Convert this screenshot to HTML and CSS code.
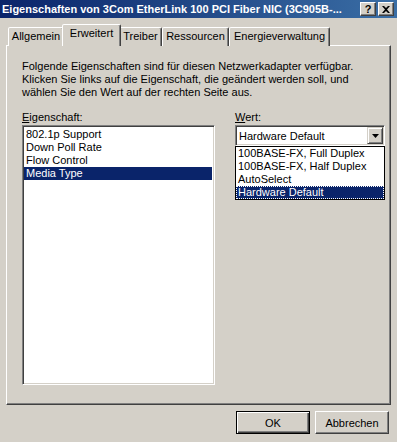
FILE: index.html
```html
<!DOCTYPE html>
<html lang="de">
<head>
<meta charset="UTF-8" />
<title>Eigenschaften von 3Com EtherLink 100 PCI Fiber NIC</title>
<link rel="stylesheet" href="styles.css">
</head>
<body>
<div class="dialog">
  <div class="titlebar">
    <span class="title">Eigenschaften von 3Com EtherLink 100 PCI Fiber NIC (3C905B-...</span>
    <div class="caption-buttons">
      <span class="cap-btn">?</span>
      <span class="cap-btn">
        <svg width="8" height="7" viewBox="0 0 8 7"><path d="M0 0h2l2 2 2-2h2L5 3.5 8 7H6L4 5 2 7H0l3-3.5z" fill="#000"/></svg>
      </span>
    </div>
  </div>

  <div class="tabs">
    <span class="tab tab-allgemein">Allgemein</span>
    <span class="tab active tab-erweitert">Erweitert</span>
    <span class="tab tab-treiber">Treiber</span>
    <span class="tab tab-ressourcen">Ressourcen</span>
    <span class="tab tab-energie">Energieverwaltung</span>
  </div>

  <div class="panel">
    <p class="intro">Folgende Eigenschaften sind für diesen Netzwerkadapter verfügbar.
      Klicken Sie links auf die Eigenschaft, die geändert werden soll, und
      wählen Sie den Wert auf der rechten Seite aus.</p>

    <div class="columns">
      <div class="col-left">
        <div class="label"><u>E</u>igenschaft:</div>
        <ul class="listbox">
          <li>802.1p Support</li>
          <li>Down Poll Rate</li>
          <li>Flow Control</li>
          <li class="selected">Media Type</li>
        </ul>
      </div>
      <div class="col-right">
        <div class="label"><u>W</u>ert:</div>
        <div class="combo">
          <div class="combo-field">
            <span class="combo-value">Hardware Default</span>
            <span class="combo-btn">
              <svg width="7" height="4" viewBox="0 0 7 4"><path d="M0 0h7L3.5 4z" fill="#000"/></svg>
            </span>
          </div>
          <ul class="dropdown">
            <li>100BASE-FX, Full Duplex</li>
            <li>100BASE-FX, Half Duplex</li>
            <li>AutoSelect</li>
            <li class="selected">Hardware Default</li>
          </ul>
        </div>
      </div>
    </div>
  </div>

  <div class="actions">
    <button class="btn default">OK</button>
    <button class="btn">Abbrechen</button>
  </div>
</div>
</body>
</html>
```

FILE: styles.css
```css
/* Windows 2000 Eigenschaften-Dialog */
body {
  margin: 0;
  background: #d4d0c8;
  font-family: 'Liberation Sans', Arial, sans-serif;
  font-size: 11px;
  color: #000;
}
.dialog {
  width: 397px;
  height: 442px;
  background: #d4d0c8;
}
.titlebar {
  height: 18px;
  display: flex;
  align-items: center;
  justify-content: space-between;
  padding: 0 3px 0 2px;
  background: linear-gradient(to right, #0a246a, #3a6ea5);
}
.title {
  color: #fff;
  font-weight: 700;
  font-size: 11px;
  white-space: nowrap;
}
.caption-buttons {
  display: flex;
  gap: 2px;
}
.cap-btn {
  width: 16px;
  height: 14px;
  box-sizing: border-box;
  background: #d4d0c8;
  border: 1px solid;
  border-color: #fff #404040 #404040 #fff;
  box-shadow: inset -1px -1px 0 #808080;
  display: flex;
  align-items: center;
  justify-content: center;
  font-weight: 700;
  font-size: 11px;
  line-height: 1;
}
.tabs {
  display: flex;
  align-items: flex-end;
  padding: 6px 0 0 8px;
  height: 21px;
  position: relative;
  z-index: 1;
}
.tab {
  height: 19px;
  margin-bottom: -1px;
  box-sizing: border-box;
  border: 1px solid;
  border-bottom: none;
  border-color: #fff #404040 transparent #fff;
  box-shadow: inset -1px 0 0 #808080;
  border-radius: 2px 2px 0 0;
  background: #d4d0c8;
  line-height: 17px;
  text-align: center;
}
.tab-allgemein { width: 56px; }
.tab-erweitert { width: 59px; }
.tab-treiber { width: 43px; }
.tab-ressourcen { width: 67px; }
.tab-energie { width: 101px; }
.tab.active {
  height: 22px;
  margin: 0 -2px -1px;
  position: relative;
  z-index: 2;
}
.panel {
  margin: 0 6px;
  height: 360px;
  box-sizing: border-box;
  border: 1px solid;
  border-color: #fff #404040 #404040 #fff;
  box-shadow: inset -1px -1px 0 #808080;
  padding: 14px 5px 14px 15px;
}
.intro {
  margin: 0;
  line-height: 13px;
}
.columns {
  display: flex;
  gap: 20px;
  margin-top: 12px;
}
.label {
  line-height: 13px;
  margin-bottom: 1px;
}
.col-left {
  width: 193px;
}
.col-right {
  width: 150px;
}
.listbox {
  list-style: none;
  margin: 0;
  padding: 1px 0;
  height: 260px;
  box-sizing: border-box;
  background: #fff;
  border: 1px solid;
  border-color: #808080 #fff #fff #808080;
  box-shadow: inset 1px 1px 0 #404040, inset -1px -1px 0 #d4d0c8;
}
.listbox li {
  line-height: 13px;
  padding: 0 2px;
  margin: 0 2px 0 1px;
}
.listbox li:first-child {
  margin-top: 1px;
}
.listbox li.selected {
  background: #0a246a;
  color: #fff;
}
.combo {
  position: relative;
}
.combo-field {
  height: 21px;
  box-sizing: border-box;
  background: #fff;
  border: 1px solid;
  border-color: #808080 #fff #fff #808080;
  box-shadow: inset 1px 1px 0 #404040, inset -1px -1px 0 #d4d0c8;
  display: flex;
  align-items: center;
  padding: 2px 2px 2px 3px;
}
.combo-value {
  flex: 1;
}
.combo-btn {
  width: 16px;
  height: 17px;
  box-sizing: border-box;
  background: #d4d0c8;
  border: 1px solid;
  border-color: #d4d0c8 #404040 #404040 #d4d0c8;
  box-shadow: inset 1px 1px 0 #fff, inset -1px -1px 0 #808080;
  display: flex;
  align-items: center;
  justify-content: center;
  margin-right: -1px;
}
/* aufgeklappte Liste liegt ueber dem Inhalt */
.dropdown {
  position: absolute;
  top: 21px;
  left: 0;
  right: 0;
  list-style: none;
  margin: 0;
  padding: 0;
  background: #fff;
  border: 1px solid #000;
}
.dropdown li {
  line-height: 13px;
  padding: 0 2px;
}
.dropdown li.selected {
  background: #0a246a;
  color: #fff;
  outline: 1px dotted #fff;
  outline-offset: -1px;
}
.actions {
  display: flex;
  justify-content: flex-end;
  gap: 5px;
  padding: 6px 8px 0 0;
}
.btn {
  width: 74px;
  height: 23px;
  box-sizing: border-box;
  background: #d4d0c8;
  font-family: 'Liberation Sans', Arial, sans-serif;
  font-size: 11px;
  color: #000;
  border: 1px solid;
  border-color: #fff #404040 #404040 #fff;
  box-shadow: inset -1px -1px 0 #808080;
  padding: 0;
}
.btn.default {
  border: 1px solid #000;
  box-shadow: inset 1px 1px 0 #fff, inset -1px -1px 0 #404040, inset -2px -2px 0 #808080;
}
```
